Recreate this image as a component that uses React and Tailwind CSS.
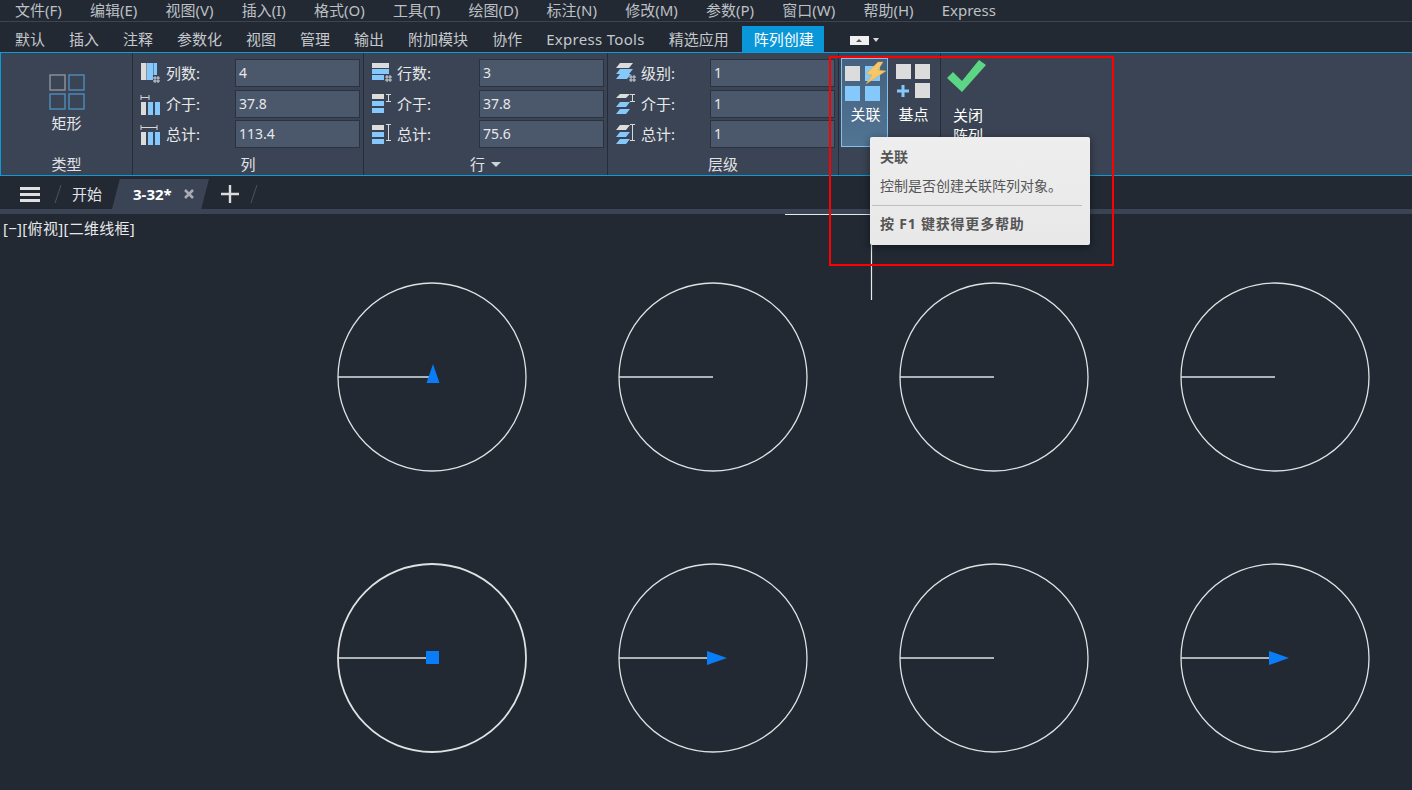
const font = "font-['Noto_Sans','Noto_Sans_CJK_SC',sans-serif]";

const menus = ["文件(F)", "编辑(E)", "视图(V)", "插入(I)", "格式(O)", "工具(T)", "绘图(D)", "标注(N)", "修改(M)", "参数(P)", "窗口(W)", "帮助(H)", "Express"];
const tabs = ["默认", "插入", "注释", "参数化", "视图", "管理", "输出", "附加模块", "协作", "Express Tools", "精选应用"];

const GRAY = "#dcdcdc";
const BLUE = "#85c8fb";

// little # mark in the corner of the count icons
function Hash({ x, y }) {
  return (
    <g stroke="#cfd3d8" strokeWidth="1" fill="none">
      <path d={`M${x + 2} ${y}v7M${x + 5} ${y}v7M${x} ${y + 2}h7M${x} ${y + 5}h7`} />
    </g>
  );
}

function ColIcon({ kind }) {
  if (kind === "count") {
    return (
      <svg width="22" height="22" viewBox="0 0 22 22">
        <rect x="1" y="1" width="5.500" height="17" fill={GRAY} />
        <rect x="7" y="1" width="6" height="17" fill={BLUE} />
        <rect x="13.500" y="1" width="3.500" height="12" fill={BLUE} />
        <Hash x={13} y={14} />
      </svg>
    );
  }
  const wide = kind === "total";
  return (
    <svg width="22" height="22" viewBox="0 0 22 22">
      <path d={wide ? "M1 2v5M17 2v5M1 4.500h16" : "M1 2v5M9 2v5M1 4.500h8"} stroke="#d8d8d8" fill="none" />
      <rect x="1" y="9" width="5" height="13" fill={GRAY} />
      <rect x="8" y="9" width="5" height="13" fill={BLUE} />
      <rect x="15" y="9" width="5" height="13" fill={BLUE} />
    </svg>
  );
}

function RowIcon({ kind }) {
  if (kind === "count") {
    return (
      <svg width="22" height="22" viewBox="0 0 22 22">
        <rect x="1" y="1" width="17" height="5" fill={GRAY} />
        <rect x="1" y="7" width="17" height="5" fill={BLUE} />
        <rect x="1" y="13" width="12" height="5" fill={BLUE} />
        <Hash x={14} y={13} />
      </svg>
    );
  }
  const tall = kind === "total";
  return (
    <svg width="22" height="22" viewBox="0 0 22 22">
      <rect x="1" y={tall ? 2 : 1} width="12" height="5" fill={GRAY} />
      <rect x="1" y={tall ? 9 : 8} width="12" height="5" fill={BLUE} />
      <rect x="1" y={tall ? 16 : 15} width="12" height="5" fill={BLUE} />
      <path d={tall ? "M15 1.500h5M17.500 1.500v16M15 17.500h5" : "M15 1.500h5M17.500 1.500v7M15 8.500h5"} stroke="#d8d8d8" fill="none" />
    </svg>
  );
}

function LevelIcon({ kind }) {
  if (kind === "count") {
    return (
      <svg width="22" height="22" viewBox="0 0 22 22">
        <path d="M5 1h13l-4 5H1z" fill={GRAY} />
        <path d="M5 7h13l-4 5H1z" fill={BLUE} />
        <path d="M5 12h11l-4 5H1z" fill={BLUE} />
        <Hash x={14} y={13} />
      </svg>
    );
  }
  const tall = kind === "total";
  return (
    <svg width="22" height="22" viewBox="0 0 22 22">
      <path d={tall ? "M5 2h10l-4 5H1z" : "M5 1h10l-4 4H1z"} fill={GRAY} />
      <path d="M5 9h10l-4 5H1z" fill={BLUE} />
      <path d="M5 16h10l-4 5H1z" fill={BLUE} />
      <path d={tall ? "M15 1.500h5M17.500 1.500v16M15 17.500h5" : "M15 1.500h5M17.500 1.500v7M15 8.500h5"} stroke="#d8d8d8" fill="none" />
    </svg>
  );
}

function Field({ icon, label, value, labelW }) {
  return (
    <div className="flex items-center h-[28px]">
      <div className="w-[26px] flex justify-start">{icon}</div>
      <span className={`${labelW} text-[15px] text-[#e6e8ea]`}>{label}</span>
      <div className="w-[125px] h-[28px] bg-[#4b576b] border border-[#2a323e] px-[3px] text-[14px] leading-[26px] text-[#e6e8ea]">{value}</div>
    </div>
  );
}

function Panel({ width, title, children, arrow }) {
  return (
    <div className={`${width} shrink-0 h-full border-r border-[#252c37] flex flex-col`}>
      <div className="h-[101px] pt-[6px]">{children}</div>
      <div className="h-[20px] flex items-center justify-center gap-[6px] text-[15px] text-[#e0e2e5]">
        {title}
        {arrow && <span className="w-0 h-0 border-x-[5px] border-x-transparent border-t-[5px] border-t-[#cfd2d6]" />}
      </div>
    </div>
  );
}

function Fields({ rows, labelW }) {
  return (
    <div className="pl-[7px] flex flex-col">
      <Field {...rows[0]} labelW={labelW} />
      <div className="h-[3px]" />
      <Field {...rows[1]} labelW={labelW} />
      <div className="h-[2px]" />
      <Field {...rows[2]} labelW={labelW} />
    </div>
  );
}

function Canvas() {
  const xs = [432, 713, 994, 1275];
  const ys = [377, 658];
  return (
    <svg className="absolute inset-0" width="1412" height="576" viewBox="0 214 1412 576">
      <path d="M785 214.500H871.500M871.500 245V300" stroke="#e8e8e8" strokeWidth="1.200" fill="none" />
      {ys.map((y) =>
        xs.map((x) => {
          const selected = x === 432 && y === 658;
          return (
            <g key={`${x}-${y}`} stroke="#dfe1e3" fill="none" strokeWidth={selected ? 1.800 : 1.300}>
              <circle cx={x} cy={y} r="94" />
              <line x1={x - 94} y1={y} x2={x} y2={y} strokeWidth={1.400} />
            </g>
          );
        })
      )}
      <path d="M433 364l6.500 19h-13z" fill="#0a7cf5" />
      <rect x="426" y="651" width="13" height="13" fill="#0a7cf5" />
      <path d="M707 651l20 7-20 7z" fill="#0a7cf5" />
      <path d="M1269 651l20 7-20 7z" fill="#0a7cf5" />
    </svg>
  );
}

export default function App() {
  return (
    <div className={`${font} w-[1412px] h-[790px] bg-[#222933] relative overflow-hidden flex flex-col`}>
      {/* menu bar */}
      <div className="h-[22px] shrink-0 border-b border-[#3c4450] flex items-center pl-[15px] gap-[28.200px] text-[15px] text-[#bdc0c4]">
        {menus.map((m) => (
          <span key={m}>{m}</span>
        ))}
      </div>

      {/* ribbon tabs */}
      <div className="h-[30px] shrink-0 flex items-end pl-[3px] text-[15px] text-[#c5c8cc]">
        {tabs.map((t) => (
          <div key={t} className={`h-[26px] px-[12px] leading-[27px] ${t === "Express Tools" ? "tracking-[0.300px]" : ""}`}>
            {t}
          </div>
        ))}
        <div className="h-[26px] w-[82px] ml-[1px] pl-[12px] leading-[27px] bg-[#0a97d9] text-white">阵列创建</div>
        <div className="ml-[26px] h-[26px] flex items-center gap-[4px] pt-[2px]">
          <div className="w-[19px] h-[9px] bg-[#f0f0f0] flex items-center justify-center">
            <span className="w-0 h-0 border-x-[3px] border-x-transparent border-b-[3px] border-b-[#555]" />
          </div>
          <span className="w-0 h-0 border-x-[3px] border-x-transparent border-t-[4px] border-t-[#d8d8d8]" />
        </div>
      </div>

      {/* ribbon */}
      <div className="h-[124px] shrink-0 bg-[#3b4454] border-y border-[#0f9ad8] border-l flex">
        <Panel width="w-[132px]" title="类型">
          <div className="flex flex-col items-center pt-[15px]">
            <svg width="36" height="36" viewBox="0 0 36 36">
              <g fill="none" strokeWidth="1.500">
                <rect x="1" y="1" width="15" height="15" stroke="#8b8f96" />
                <rect x="20" y="1" width="15" height="15" stroke="#4d86b4" />
                <rect x="1" y="20" width="15" height="15" stroke="#4d86b4" />
                <rect x="20" y="20" width="15" height="15" stroke="#4d86b4" />
              </g>
            </svg>
            <span className="text-[15px] text-[#e6e8ea] leading-[26px]">矩形</span>
          </div>
        </Panel>

        <Panel width="w-[231px]" title="列">
          <Fields
            labelW="w-[69px]"
            rows={[
              { icon: <ColIcon kind="count" />, label: "列数:", value: "4" },
              { icon: <ColIcon kind="gap" />, label: "介于:", value: "37.8" },
              { icon: <ColIcon kind="total" />, label: "总计:", value: "113.4" },
            ]}
          />
        </Panel>

        <Panel width="w-[244px]" title="行" arrow>
          <Fields
            labelW="w-[82px]"
            rows={[
              { icon: <RowIcon kind="count" />, label: "行数:", value: "3" },
              { icon: <RowIcon kind="gap" />, label: "介于:", value: "37.8" },
              { icon: <RowIcon kind="total" />, label: "总计:", value: "75.6" },
            ]}
          />
        </Panel>

        <Panel width="w-[231px]" title="层级">
          <Fields
            labelW="w-[69px]"
            rows={[
              { icon: <LevelIcon kind="count" />, label: "级别:", value: "1" },
              { icon: <LevelIcon kind="gap" />, label: "介于:", value: "1" },
              { icon: <LevelIcon kind="total" />, label: "总计:", value: "1" },
            ]}
          />
        </Panel>

        {/* 关联 / 基点 */}
        <div className="w-[102px] shrink-0 h-full border-r border-[#252c37] pl-[2px] pt-[5px] flex text-[15px] text-white">
          <div className="w-[47px] h-[89px] border border-[#7cc3f2] bg-gradient-to-b from-[#45617f] to-[#517593] flex flex-col items-center">
            <svg width="46" height="40" viewBox="0 0 46 40" className="mt-[2px]">
              <rect x="3" y="5" width="15" height="15" fill={GRAY} />
              <rect x="23" y="5" width="15" height="15" fill={BLUE} />
              <rect x="3" y="25" width="15" height="15" fill={BLUE} />
              <rect x="23" y="25" width="15" height="15" fill={BLUE} />
              <path d="M36 1L24 13l6 1-6 9 20-13-8-1 5-8z" fill="#f6c667" stroke="#d9a441" strokeWidth="0.500" />
            </svg>
            <span className="mt-[2px] pl-[2px]">关联</span>
          </div>
          <div className="w-[51px] flex flex-col items-center">
            <svg width="40" height="40" viewBox="0 0 40 40" className="mt-[6px]">
              <rect x="2" y="0" width="15" height="15" fill={GRAY} />
              <rect x="21" y="0" width="15" height="15" fill={GRAY} />
              <rect x="21" y="19" width="15" height="15" fill={GRAY} />
              <path d="M9 21v12M3 27h12" stroke={BLUE} strokeWidth="3" />
            </svg>
            <span className="-mt-[1px]">基点</span>
          </div>
        </div>

        {/* 关闭阵列 */}
        <div className="flex-1 pl-[5px] pt-[6px] text-[15px] text-white">
          <svg width="42" height="34" viewBox="0 0 42 34">
            <path d="M1 19l6-6 9 9L33 1l7 5-24 27z" fill="#5cd585" />
          </svg>
          <div className="pl-[7px] mt-[12px] leading-[20px]">
            关闭
            <br />
            阵列
          </div>
        </div>
      </div>

      {/* file tabs */}
      <div className="h-[33px] shrink-0 flex items-end text-[15px] text-[#e0e2e5]">
        <div className="w-[20px]" />
        <div className="h-[30px] w-[20px] flex flex-col justify-center gap-[3px]">
          <div className="h-[3px] bg-[#e0e0e0]" />
          <div className="h-[3px] bg-[#e0e0e0]" />
          <div className="h-[3px] bg-[#e0e0e0]" />
        </div>
        <div className="h-[30px] ml-[13px] flex items-center">
          <svg width="10" height="20" viewBox="0 0 10 20">
            <path d="M8 1L2 19" stroke="#4a525e" fill="none" />
          </svg>
        </div>
        <div className="h-[30px] leading-[30px] ml-[9px] w-[40px]">开始</div>
        <div className="h-[30px] w-[97px] bg-[#3b4454] [clip-path:polygon(8%_0,100%_0,92%_100%,0_100%)] flex items-center pl-[21px] text-white font-bold">
          3-32*
          <svg width="10" height="10" viewBox="0 0 10 10" className="ml-[12px]">
            <path d="M1 1l8 8M9 1l-8 8" stroke="#a9adb3" strokeWidth="2.500" />
          </svg>
        </div>
        <div className="h-[30px] ml-[11px] flex items-center">
          <svg width="20" height="20" viewBox="0 0 20 20">
            <path d="M10 1v18M1 10h18" stroke="#dcdcdc" strokeWidth="2.400" />
          </svg>
        </div>
        <div className="h-[30px] ml-[9px] flex items-center">
          <svg width="10" height="20" viewBox="0 0 10 20">
            <path d="M8 1L2 19" stroke="#4a525e" fill="none" />
          </svg>
        </div>
      </div>
      <div className="h-[5px] shrink-0 bg-[#3b4454]" />

      {/* drawing area */}
      <div className="flex-1 relative">
        <Canvas />
        <div className="absolute left-[3px] top-[3px] text-[15px] tracking-[0.300px] text-[#e6e8ea]">[−][俯视][二维线框]</div>
      </div>

      {/* annotation box */}
      <div className="absolute left-[829px] top-[56px] w-[285px] h-[210px] border-2 border-[#ff0000]" />

      {/* tooltip */}
      <div className="absolute left-[870px] top-[137px] w-[220px] h-[108px] rounded-[2px] bg-gradient-to-b from-[#eeeeee] to-[#e8e8e8] shadow-[0_2px_8px_rgba(0,0,0,0.45)] text-[14px] text-[#555] px-[10px]">
        <div className="pt-[10px] font-bold leading-[20px]">关联</div>
        <div className="mt-[9px] leading-[20px] whitespace-nowrap">控制是否创建关联阵列对象。</div>
        <div className="-ml-[8px] -mr-[2px] mt-[9px] h-px bg-[#bdbdbd]" />
        <div className="mt-[8px] font-bold leading-[20px] tracking-[0.800px] whitespace-nowrap">按 F1 键获得更多帮助</div>
      </div>
    </div>
  );
}
